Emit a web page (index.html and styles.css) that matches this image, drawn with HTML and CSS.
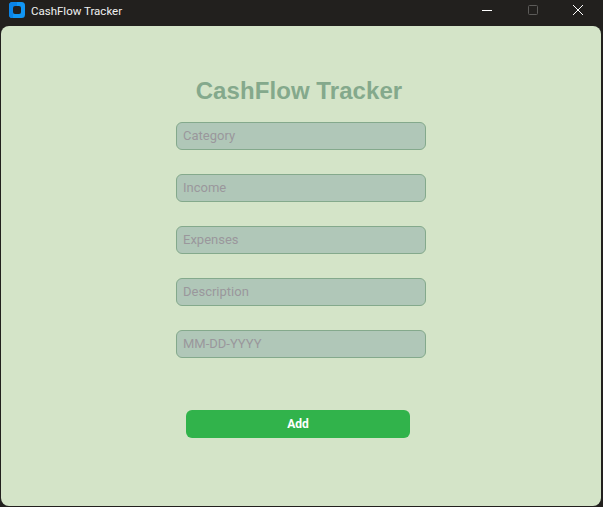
FILE: index.html
```html
<!DOCTYPE html>
<html lang="en">
<head>
<meta charset="utf-8">
<title>CashFlow Tracker</title>
<link rel="stylesheet" href="styles.css">
</head>
<body>
<div class="window">
  <header class="titlebar">
    <svg class="app-icon" width="16" height="16" viewBox="0 0 16 16" aria-hidden="true">
      <rect width="16" height="16" rx="3.5" fill="#1196f5"/>
      <path d="M0 3.5A3.5 3.5 0 0 1 3.5 0H8V4H6A2 2 0 0 0 4 6V16H3.5A3.5 3.5 0 0 1 0 12.500Z" fill="#0a84e8"/>
      <rect x="4" y="4" width="8" height="8" rx="2" fill="#22201e"/>
    </svg>
    <span class="app-name">CashFlow Tracker</span>
    <div class="controls">
      <button class="control" aria-label="Minimize">
        <svg width="12" height="12" viewBox="0 0 12 12"><path d="M1 6.500H11" stroke="#fff" stroke-width="1"/></svg>
      </button>
      <button class="control" aria-label="Maximize">
        <svg width="12" height="12" viewBox="0 0 12 12"><rect x="1.500" y="1.500" width="9" height="9" rx="1" fill="none" stroke="#5c5b59" stroke-width="1"/></svg>
      </button>
      <button class="control" aria-label="Close">
        <svg width="12" height="12" viewBox="0 0 12 12"><path d="M1 1L11 11M11 1L1 11" stroke="#fff" stroke-width="1"/></svg>
      </button>
    </div>
  </header>
  <main class="content">
    <h1 class="title">CashFlow Tracker</h1>
    <form class="form">
      <input class="field" placeholder="Category">
      <input class="field" placeholder="Income">
      <input class="field" placeholder="Expenses">
      <input class="field" placeholder="Description">
      <input class="field" placeholder="MM-DD-YYYY">
      <button class="add" type="button">Add</button>
    </form>
  </main>
</div>
</body>
</html>
```
FILE: styles.css
```css
* { box-sizing: border-box; }
html, body { margin: 0; height: 100%; }
body { background: #22201e; overflow: hidden; }
.window { width: 603px; height: 507px; display: flex; flex-direction: column; }
.titlebar { height: 26px; flex: none; display: flex; align-items: center; padding: 0 0 6px 9px; background: #22201e; }
.app-icon { flex: none; }
.app-name { margin-left: 6px; padding-top: 1px; font: 11.500px Roboto, "Open Sans", sans-serif; color: #f0f0f0; }
.controls { margin-left: auto; margin-right: 2px; display: flex; height: 20px; }
.control { width: 45.500px; height: 100%; padding: 0; border: 0; background: none; display: flex; align-items: center; justify-content: center; }
.content { width: 600px; height: 480px; margin-left: 1px; background: #d4e4c8; border-radius: 8px; padding-top: 51px; display: flex; flex-direction: column; align-items: center; }
.title { margin: 0 4px 0 0; font: bold 24px/28px "Liberation Sans", Arial, sans-serif; letter-spacing: 0.07px; color: #84a98c; }
.form { margin-top: 17px; display: flex; flex-direction: column; align-items: center; gap: 24px; }
.field { width: 250px; height: 28px; padding: 0 6px 2px; border: 1px solid #84a98c; border-radius: 6px; background: #b0c7b8; font: 13px Roboto, sans-serif; color: #333; outline: 0; }
.field::placeholder { color: #9a979c; opacity: 1; }
.add { width: 224px; height: 28px; margin: 28px 6px 0 0; border: 0; border-radius: 6px; background: #31b34b; color: #fff; font: bold 12px Roboto, sans-serif; }
```
